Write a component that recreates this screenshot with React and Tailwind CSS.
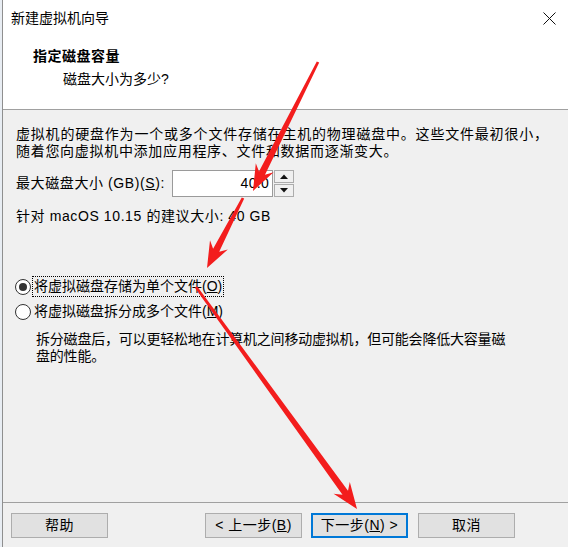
import React from 'react'

function arrowPoints(x1, y1, x2, y2) {
  const dx = x2 - x1
  const dy = y2 - y1
  const len = Math.hypot(dx, dy)
  const ux = dx / len
  const uy = dy / len
  const px = -uy
  const py = ux
  const headLen = 26
  const headW = 10
  const neckW = 3.4
  const tailW = 1.3
  const bx = x2 - ux * headLen
  const by = y2 - uy * headLen
  const nx = x2 - ux * (headLen - 6)
  const ny = y2 - uy * (headLen - 6)
  const pts = [
    [x1 + px * tailW, y1 + py * tailW],
    [nx + px * neckW, ny + py * neckW],
    [bx + px * headW, by + py * headW],
    [x2, y2],
    [bx - px * headW, by - py * headW],
    [nx - px * neckW, ny - py * neckW],
    [x1 - px * tailW, y1 - py * tailW],
  ]
  return pts.map((p) => p[0].toFixed(1) + ',' + p[1].toFixed(1)).join(' ')
}

function Radio({ checked }) {
  return (
    <span className="w-[16px] h-[16px] rounded-full border border-[#333] bg-white flex items-center justify-center shrink-0">
      {checked && <span className="w-[8px] h-[8px] rounded-full bg-[#333]" />}
    </span>
  )
}

function Btn({ children, primary }) {
  return (
    <div
      className={
        primary
          ? 'w-[97px] h-[25px] flex items-center justify-center bg-[#e1e1e1] border-2 border-[#0078d7] text-[14px] tracking-[0.5px]'
          : 'w-[97px] h-[25px] flex items-center justify-center bg-[#e1e1e1] border border-[#adadad] text-[14px] tracking-[0.5px]'
      }
    >
      {children}
    </div>
  )
}

export default function App() {
  return (
    <div className="w-[568px] h-[547px] flex bg-[#f0f0f0] overflow-hidden relative text-black font-['Liberation_Sans','Noto_Sans_CJK_SC',sans-serif]">
      {/* edge of the window behind */}
      <div className="w-[2px] bg-[#e8edf3]" />
      <div className="w-px bg-[#8f8f8f]" />

      <div className="flex-1 flex flex-col">
        {/* Header */}
        <div className="bg-white border-b border-[#a0a0a0] h-[110px]">
          <div className="h-[36px] flex items-center justify-between pl-[8px] pr-[12px]">
            <span className="text-[14px]">新建虚拟机向导</span>
            <svg width="13" height="13" viewBox="0 0 13 13" className="text-[#111]">
              <path d="M0.5 0.5 L12.5 12.5 M12.5 0.5 L0.5 12.5" stroke="currentColor" strokeWidth="1" />
            </svg>
          </div>
          <div className="pl-[30px] pt-[10px] text-[14px] font-bold leading-[20px] tracking-[0.5px]">指定磁盘容量</div>
          <div className="pl-[60px] mt-[3px] text-[14px] leading-[20px]">磁盘大小为多少?</div>
        </div>

        {/* Body */}
        <div className="flex-1 px-[13px] pt-[16px] text-[14px] leading-[17px] whitespace-nowrap">
          <p className="tracking-[0.8px]">虚拟机的硬盘作为一个或多个文件存储在主机的物理磁盘中。这些文件最初很小，</p>
          <p className="tracking-[0.7px]">随着您向虚拟机中添加应用程序、文件和数据而逐渐变大。</p>

          <div className="mt-[10px] h-[27px] flex items-center">
            <span className="w-[156px] tracking-[0.6px]">
              最大磁盘大小 (GB)(<span className="underline">S</span>):
            </span>
            <div className="w-[101px] h-[27px] bg-white border border-[#9a9a9a] flex items-center justify-end pr-[3px] tracking-[0.3px]">
              40.0
            </div>
            <div className="ml-px w-[20px] h-[27px] flex flex-col">
              <div className="h-[13px] border border-[#acacac] bg-[#f0f0f0] flex items-center justify-center">
                <svg width="8" height="5" viewBox="0 0 8 5"><path d="M0 5 L4 0.5 L8 5 Z" fill="#111" /></svg>
              </div>
              <div className="h-[13px] mt-px border border-[#acacac] bg-[#f0f0f0] flex items-center justify-center">
                <svg width="8" height="5" viewBox="0 0 8 5"><path d="M0 0 L8 0 L4 4.5 Z" fill="#111" /></svg>
              </div>
            </div>
          </div>

          <p className="mt-[11px] tracking-[0.6px]">针对 macOS 10.15 的建议大小: 40 GB</p>

          <div className="mt-[51px] h-[21px] flex items-center -ml-[1px]">
            <Radio checked />
            <span className="ml-[1px] h-[21px] flex items-center border border-dotted border-black px-[1px]">
              将虚拟磁盘存储为单个文件(<span className="underline">O</span>)
            </span>
          </div>
          <div className="mt-[4px] h-[21px] flex items-center -ml-[1px]">
            <Radio />
            <span className="ml-[2px] px-[1px]">
              将虚拟磁盘拆分成多个文件(<span className="underline">M</span>)
            </span>
          </div>
          <div className="mt-[9px] pl-[20px] tracking-[-0.2px]">
            <p>拆分磁盘后，可以更轻松地在计算机之间移动虚拟机，但可能会降低大容量磁</p>
            <p>盘的性能。</p>
          </div>
        </div>

        {/* Footer */}
        <div className="border-t border-[#a0a0a0] pt-[10px] pb-[9px] pl-[8px] pr-[53px] flex">
          <Btn>帮助</Btn>
          <div className="ml-auto flex gap-[9px]">
            <Btn>
              &lt; 上一步(<span className="underline">B</span>)
            </Btn>
            <Btn primary>
              下一步(<span className="underline">N</span>) &gt;
            </Btn>
          </div>
          <div className="ml-[10px]">
            <Btn>取消</Btn>
          </div>
        </div>
      </div>

      {/* red annotation arrows */}
      <svg className="absolute inset-0 pointer-events-none" width="568" height="547" viewBox="0 0 568 547">
        <polygon points={arrowPoints(318, 62, 253, 191)} fill="#f31d1d" />
        <polygon points={arrowPoints(243, 198, 207, 268)} fill="#f31d1d" />
        <polygon points={arrowPoints(196, 287, 357, 509)} fill="#f31d1d" />
      </svg>
    </div>
  )
}
